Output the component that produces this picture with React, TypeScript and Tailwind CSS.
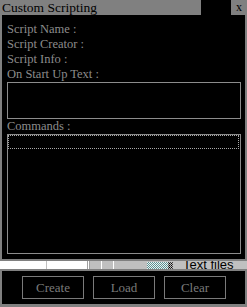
import React from 'react'

const serif = { fontFamily: '"Liberation Serif", "DejaVu Serif", serif' }

function Label({ text }: { text: string }) {
  return (
    <div className="h-[15px] pl-[5px] text-[12.5px] leading-[15px] text-[#8c8c8c] whitespace-nowrap" style={serif}>
      {text}
    </div>
  )
}

function Btn({ text }: { text: string }) {
  return (
    <button className="w-[62px] h-[23px] border border-[#7a7a7a] bg-black text-[13px] leading-[21px] text-[#7a7a7a]" style={serif}>
      {text}
    </button>
  )
}

export default function App() {
  return (
    <div className="w-[247px] h-[307px] bg-black flex flex-col overflow-hidden" style={serif}>
      {/* title */}
      <div className="h-[15px] flex shrink-0">
        <div className="w-[201px] bg-[#808080] pl-[2px] text-[13.5px] leading-[15px] text-black whitespace-nowrap" style={serif}>
          Custom Scripting
        </div>
        <div className="flex-1 bg-black" />
        <div className="w-[16px] bg-[#808080] text-[12px] leading-[14px] text-black text-center" style={serif}>x</div>
      </div>

      {/* main panel */}
      <div className="h-[246px] shrink-0 border-x-2 border-b-2 border-[#808080] bg-black pt-[7px]">
        <Label text="Script Name :" />
        <Label text="Script Creator :" />
        <Label text="Script Info :" />
        <Label text="On Start Up Text :" />
        <div className="ml-[5px] w-[234px] h-[37px] border border-[#8c8c8c]" />
        <Label text="Commands :" />
        <div className="ml-[5px] w-[234px] h-[120px] border border-[#8c8c8c]">
          <div className="w-[231px] h-[14px] border border-dotted border-[#a8a8a8]" />
        </div>
      </div>

      {/* broken status strip */}
      <div className="h-[8px] shrink-0 flex bg-[#c0c0c0] overflow-hidden">
        <div className="w-[46px] bg-white" />
        <div className="w-[1px] bg-[#c0c0c0]" />
        <div className="w-[40px] bg-white" />
        <div className="w-[1px] bg-[#a0a0a0]" />
        <div className="w-[1px] bg-white" />
        <div className="w-[1px] bg-[#a0a0a0]" />
        <div className="w-[11px]" />
        <div className="w-[1px] bg-white" />
        <div className="w-[11px]" />
        <div className="w-[1px] bg-white" />
        <div className="w-[33px]" />
        <svg width="26" height="8" className="shrink-0">
          <defs>
            <pattern id="ck" width="2" height="2" patternUnits="userSpaceOnUse">
              <rect width="2" height="2" fill="#e8f4f4" />
              <rect width="1" height="1" fill="#5f8f8f" />
              <rect x="1" y="1" width="1" height="1" fill="#5f8f8f" />
            </pattern>
            <pattern id="dk" width="2" height="2" patternUnits="userSpaceOnUse">
              <rect width="2" height="2" fill="#c0c0c0" />
              <rect width="1" height="1" fill="#000" />
              <rect x="1" y="1" width="1" height="1" fill="#404040" />
            </pattern>
          </defs>
          <rect x="0" y="1" width="21" height="7" fill="url(#ck)" />
          <rect x="21" y="1" width="5" height="7" fill="url(#dk)" />
        </svg>
        <div className="w-[10px]" />
        <div className="relative flex-1">
          <span
            className="absolute left-0 top-[-3px] text-[13px] leading-[13px] text-black whitespace-nowrap"
            style={{ fontFamily: '"Liberation Sans", Arial, sans-serif' }}
          >
            Text files
          </span>
        </div>
      </div>

      {/* buttons panel */}
      <div className="flex-1 border-x-2 border-t-2 border-b-[3px] border-[#808080] bg-black pl-[20px] pt-[5px] flex gap-[9px] items-start">
        <Btn text="Create" />
        <Btn text="Load" />
        <Btn text="Clear" />
      </div>
    </div>
  )
}
